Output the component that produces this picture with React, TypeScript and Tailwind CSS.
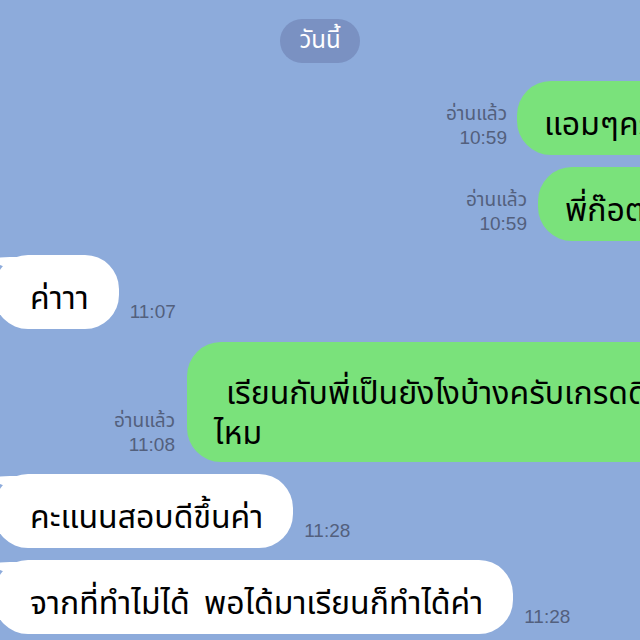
import React from "react";

const thai = { fontFamily: '"Noto Sans Thai", "Noto Sans", "DejaVu Sans", sans-serif' };

function Tail() {
  return (
    <svg
      className="absolute left-[-4px] top-[2px]"
      width="34"
      height="20"
      viewBox="0 0 34 20"
    >
      <path d="M0 3 Q8 0 20 0 L34 0 L34 16 Q16 12 0 3 Z" fill="#ffffff" />
    </svg>
  );
}

function ReadTime({ time, read = true }: { time: string; read?: boolean }) {
  return (
    <div className="flex flex-col items-end text-[19px] leading-[22px] text-[#53607d] pb-[6px] shrink-0">
      {read && <span style={thai} className="leading-[24px]">อ่านแล้ว</span>}
      <span style={{ fontFamily: '"Liberation Sans", Arial, sans-serif' }}>{time}</span>
    </div>
  );
}

function Green({ children, className }: { children: React.ReactNode; className: string }) {
  return (
    <div
      className={
        "bg-[#7ae27b] rounded-[34px] pl-[27px] text-[32px] text-black whitespace-nowrap shrink-0 " +
        className
      }
      style={thai}
    >
      {children}
    </div>
  );
}

function White({ children }: { children: React.ReactNode }) {
  return (
    <div
      className="relative bg-white rounded-[34px] pl-[36px] pr-[30px] pt-[25px] pb-[11px] text-[32px] leading-[38px] text-black whitespace-nowrap shrink-0 [word-spacing:6px]"
      style={thai}
    >
      <Tail />
      <span className="relative">{children}</span>
    </div>
  );
}

export default function App() {
  return (
    <div className="w-[640px] h-[640px] overflow-hidden bg-[#8dabdb]">
      <div className="flex flex-col pt-[19px]">
        <div className="flex justify-center">
          <div
            className="h-[44px] px-[19px] rounded-full bg-[#7a91c2] text-white text-[24px] flex items-center"
            style={thai}
          >
            วันนี้
          </div>
        </div>

        <div className="flex justify-end items-end gap-[10px] mt-[18px] mr-[-103px]">
          <ReadTime time="10:59" />
          <Green className="w-[226px] pt-[25px] pb-[11px] leading-[38px]">แอมๆครับ</Green>
        </div>

        <div className="flex justify-end items-end gap-[11px] mt-[12px] mr-[-124px]">
          <ReadTime time="10:59" />
          <Green className="w-[226px] pt-[25px] pb-[11px] leading-[38px]">พี่ก๊อตครับ</Green>
        </div>

        <div className="flex items-end gap-[11px] mt-[14px] ml-[-6px]">
          <White>ค่าาา</White>
          <ReadTime time="11:07" read={false} />
        </div>

        <div className="flex justify-end items-end gap-[12px] mt-[13px] mr-[-120px]">
          <ReadTime time="11:08" />
          <Green className="w-[573px] pt-[32px] pb-[8px] leading-[40px]">
            <span className="pl-[12px]">เรียนกับพี่เป็นยังไงบ้างครับเกรดดีขึ้น</span>
            <br />
            ไหม
          </Green>
        </div>

        <div className="flex items-end gap-[11px] mt-[12px] ml-[-6px]">
          <White>คะแนนสอบดีขึ้นค่า</White>
          <ReadTime time="11:28" read={false} />
        </div>

        <div className="flex items-end gap-[11px] mt-[12px] ml-[-6px]">
          <White>จากที่ทำไม่ได้ พอได้มาเรียนก็ทำได้ค่า</White>
          <ReadTime time="11:28" read={false} />
        </div>
      </div>
    </div>
  );
}
